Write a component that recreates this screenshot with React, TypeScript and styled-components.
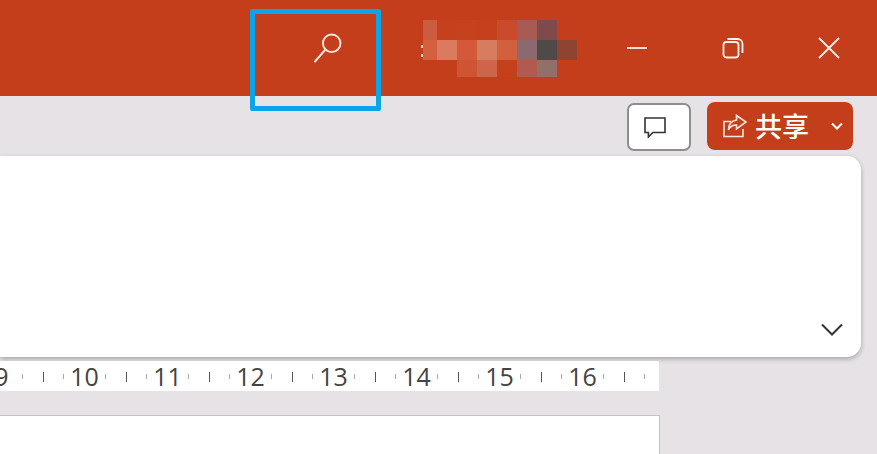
import React from "react";
import styled, { createGlobalStyle } from "styled-components";

const GlobalStyle = createGlobalStyle`
  html, body {
    margin: 0;
    padding: 0;
    background: #e6e2e6;
    font-family: "Open Sans", "Noto Sans", "Noto Sans CJK SC", sans-serif;
  }
`;

const Window = styled.div`
  position: relative;
  width: 877px;
  height: 454px;
  overflow: hidden;
  background: #e6e2e6;
`;

const TitleBar = styled.div`
  height: 96px;
  background: #c43e1b;
  display: flex;
  align-items: center;
  padding-left: 296px;
`;

const TitleButton = styled.div<{ $width: number }>`
  width: ${(props) => props.$width}px;
  height: 96px;
  display: flex;
  align-items: center;
  justify-content: center;
  flex: none;
`;

const Avatar = styled.div`
  position: relative;
  width: 154px;
  height: 57px;
  margin: 1px 12px 0 63px;
  flex: none;
  display: grid;
  grid-template-columns: 14px repeat(7, 20px);
  grid-template-rows: 20px 20px 17px;
`;

const Pixel = styled.div<{ $color: string }>`
  background: ${(props) => props.$color};
`;

const Speck = styled.i<{ $top: number }>`
  position: absolute;
  left: -2px;
  top: ${(props) => props.$top}px;
  width: 2px;
  height: 3px;
  background: #fbdcc8;
`;

const Highlight = styled.div`
  position: absolute;
  left: 250px;
  top: 9px;
  width: 131px;
  height: 102px;
  box-sizing: border-box;
  border: 5px solid #0aa5e8;
  border-radius: 2px;
`;

const ActionRow = styled.div`
  height: 60px;
  box-sizing: border-box;
  display: flex;
  justify-content: flex-end;
  align-items: flex-start;
  gap: 16px;
  padding: 6px 24px 0 0;
`;

const CommentButton = styled.div`
  width: 64px;
  height: 48px;
  margin-top: 1px;
  box-sizing: border-box;
  background: #fff;
  border: 2px solid #8f8e8f;
  border-radius: 7px;
  display: flex;
  align-items: center;
  justify-content: center;
  padding-right: 8px;
`;

const ShareButton = styled.div`
  width: 146px;
  height: 48px;
  box-sizing: border-box;
  background: #c43e1b;
  border-radius: 8px;
  color: #fff;
  display: flex;
  align-items: center;
  padding-left: 15px;
`;

const ShareLabel = styled.span`
  font-family: "Noto Sans CJK SC", sans-serif;
  font-size: 27px;
  line-height: 48px;
  font-weight: 500;
  margin-left: 7px;
  margin-right: 22px;
  white-space: nowrap;
`;

const RibbonCard = styled.div`
  width: 861px;
  height: 201px;
  box-sizing: border-box;
  background: #fff;
  border-radius: 0 14px 14px 0;
  box-shadow: 0 2px 5px rgba(0, 0, 0, 0.28);
  display: flex;
  justify-content: flex-end;
  align-items: flex-end;
  padding: 0 18px 21px 0;
`;

const Ruler = styled.div`
  width: 659px;
  height: 30px;
  margin-top: 4px;
  background: #fff;
  display: flex;
`;

const RulerStrip = styled.div`
  display: flex;
  flex: none;
  margin-left: -40px;
`;

const RulerUnit = styled.div`
  width: 83px;
  height: 30px;
  flex: none;
  position: relative;
`;

const RulerNumber = styled.span`
  display: block;
  text-align: center;
  font-size: 25px;
  line-height: 30px;
  color: #444;
  font-family: "Open Sans", sans-serif;
`;

const Tick = styled.i<{ $at: number; $major?: boolean }>`
  position: absolute;
  left: ${(props) => props.$at}px;
  top: ${(props) => (props.$major ? 11 : 13)}px;
  width: 1px;
  height: ${(props) => (props.$major ? 10 : 5)}px;
  background: ${(props) => (props.$major ? "#555" : "#aaa")};
`;

const Page = styled.div`
  width: 660px;
  height: 60px;
  margin-top: 24px;
  box-sizing: border-box;
  background: #fff;
  border-top: 1px solid #c4c2c4;
  border-right: 1px solid #c4c2c4;
`;

const PIXELS: string[] = [
  "#cb5c3f", "#c5401d", "#c6411e", "#c5401d", "#cc4a2c", "#a85a55", "#7e4a4c", "#c43e1b",
  "#d4603f", "#dc7a60", "#d4583a", "#d67c5f", "#d2603e", "#8a6a70", "#4e4a48", "#8f4432",
  "#c43e1b", "#c43e1b", "#cf5434", "#d0644a", "#c5401d", "#b05a50", "#91706a", "#c43e1b",
];

const UNITS = [9, 10, 11, 12, 13, 14, 15, 16];

const App = () => {
  return (
    <Window>
      <GlobalStyle />
      <TitleBar>
        <TitleButton $width={64}>
          <svg width="32" height="32" viewBox="0 0 32 32" fill="none" stroke="#fbe9e0" strokeWidth="1.9">
            <circle cx="19.7" cy="11.3" r="8.8" />
            <path d="M13.5 17.5 3 29.5" strokeLinecap="round" />
          </svg>
        </TitleButton>
        <Avatar>
          {PIXELS.map((color, i) => (
            <Pixel key={i} $color={color} />
          ))}
          <Speck $top={25} />
          <Speck $top={34} />
        </Avatar>
        <TitleButton $width={96}>
          <svg width="20" height="4" viewBox="0 0 20 4">
            <path d="M0 2h20" stroke="#fdf0e8" strokeWidth="1.8" />
          </svg>
        </TitleButton>
        <TitleButton $width={96}>
          <svg width="22" height="22" viewBox="0 0 22 22" fill="none" stroke="#fdf0e8" strokeWidth="1.8">
            <rect x="1.5" y="5" width="15" height="15.5" rx="3" />
            <path d="M5.5 2h10a5 5 0 0 1 5 5v9" />
          </svg>
        </TitleButton>
        <TitleButton $width={96}>
          <svg width="22" height="22" viewBox="0 0 22 22" fill="none" stroke="#fdf0e8" strokeWidth="1.8">
            <path d="M1 1l20 20M21 1 1 21" />
          </svg>
        </TitleButton>
      </TitleBar>

      <ActionRow>
        <CommentButton>
          <svg width="22" height="21" viewBox="0 0 22 21" fill="none" stroke="#333" strokeWidth="1.6">
            <path d="M1 1h20v14.5H8.8L4.4 20v-4.5H1z" />
          </svg>
        </CommentButton>
        <ShareButton>
          <svg width="26" height="24" viewBox="0 0 26 24" fill="none" stroke="#fde5da" strokeWidth="1.6">
            <path d="M9 7.5H2v15h19V15" />
            <path d="M14.5 1.5 24 8l-9.5 7v-4c-4 0-6.5 1.5-8 5 0-5.5 2.5-9 8-10z" />
          </svg>
          <ShareLabel>共享</ShareLabel>
          <svg width="12" height="8" viewBox="0 0 12 8" fill="none" stroke="#fff" strokeWidth="2">
            <path d="M1 1.5 6 6.5 11 1.5" />
          </svg>
        </ShareButton>
      </ActionRow>

      <RibbonCard>
        <svg width="22" height="13" viewBox="0 0 22 13" fill="none" stroke="#333" strokeWidth="2">
          <path d="M1 1.5 11 11.5 21 1.5" />
        </svg>
      </RibbonCard>

      <Ruler>
        <RulerStrip>
          {UNITS.map((n) => (
            <RulerUnit key={n}>
              <RulerNumber>{n}</RulerNumber>
              <Tick $at={62} />
              <Tick $at={83} $major />
              <Tick $at={103} />
            </RulerUnit>
          ))}
        </RulerStrip>
      </Ruler>

      <Page />
      <Highlight />
    </Window>
  );
};

export default App;
